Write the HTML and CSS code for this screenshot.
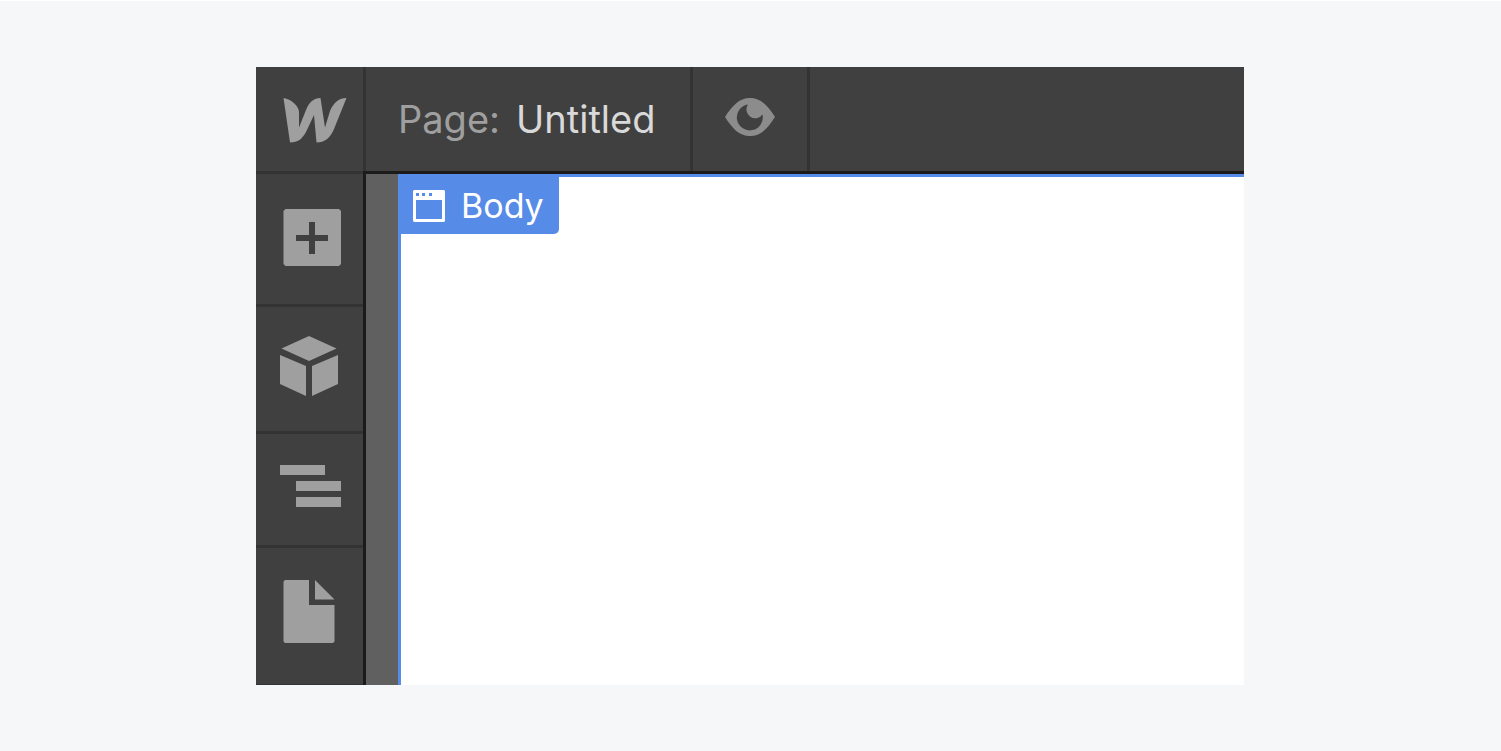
FILE: index.html
```html
<!DOCTYPE html>
<html lang="en">

<head>
    <meta charset="UTF-8">
    <meta name="viewport" content="width=device-width, initial-scale=1.0">
    <title>Designer</title>
    <link rel="stylesheet" href="styles.css">
</head>

<body>

    <div class="designer">
        <header class="topbar">
            <a href="#" class="logo" aria-label="Dashboard">
                <svg width="64" height="46" viewBox="0 0 64 46">
                    <path d="M0.500 0C8 1 16 8 16 14V29.500L23 12C26 4 31 0 37.500 0L42 29.500L47 13C51 4 56 0 63.500 0L51 31C47 40 42 44.500 33.500 44.500L31 17L23 34C19 41 15 44.500 7 44.500Z"/>
                </svg>
            </a>
            <button class="page-name"><span>Page:</span> <strong>Untitled</strong></button>
            <button class="preview" aria-label="Preview">
                <svg width="52" height="40" viewBox="0 0 52 40">
                    <path fill-rule="evenodd" d="M1 20C8 9 15 1 26 1S44 9 51 20C44 31 37 39 26 39S8 31 1 20ZM24 7.500A13 13 0 1 0 38.500 17.500A7.800 7.800 0 1 1 24 7.500Z"/>
                </svg>
            </button>
        </header>

        <div class="workspace">
            <nav class="sidebar">
                <button class="tool tool-add" aria-label="Add element">
                    <svg width="58" height="57" viewBox="0 0 58 57">
                        <path fill-rule="evenodd" d="M2.500 0H56L58 2V55L56 57H2.500L0.500 55V2ZM26 13V26H13V32H26V45H32V32H45V26H32V13Z"/>
                    </svg>
                </button>
                <button class="tool tool-symbols" aria-label="Symbols">
                    <svg width="58" height="60" viewBox="0 0 58 60">
                        <path d="M29 0L56.500 12.500L29 25L1.500 12.500ZM0 19L26 30V60L0 48ZM58 19V48L32 60V30Z"/>
                    </svg>
                </button>
                <button class="tool tool-navigator" aria-label="Navigator">
                    <svg width="61" height="42" viewBox="0 0 61 42">
                        <path d="M0 0H45V10H0ZM16 16H61V26H16ZM16 32H61V42H16Z"/>
                    </svg>
                </button>
                <button class="tool tool-pages" aria-label="Pages">
                    <svg width="52" height="64" viewBox="0 0 52 64">
                        <path d="M2 0H26V25H51.500V61.500L50 63H2L0.500 61.500V1.500ZM32 0L51.500 19.500H32Z"/>
                    </svg>
                </button>
            </nav>

            <main class="stage">
                <div class="canvas">
                    <button class="element-tag">
                        <svg width="32" height="32" viewBox="0 0 32 32">
                            <path fill-rule="evenodd" d="M1 0H31L32 1V31L31 32H1L0 31V1ZM3 10V29H29V10ZM3 3V6H6V3ZM9 3V6H12V3ZM16 3V6H19V3Z"/>
                        </svg>
                        Body
                    </button>
                </div>
            </main>
        </div>
    </div>

</body>

</html>
```

FILE: styles.css
```css
*{
    box-sizing: border-box;
}

body{
    display: flex;
    min-height: 100vh;
    margin: 0;
    padding: 66px 257px 66px 256px;
    border-top: 1px solid #fff;
    background-color: #f5f7f9;
    font-family: Inter, "Liberation Sans", sans-serif;
}

button{
    margin: 0;
    padding: 0;
    border: none;
    background: none;
    color: inherit;
    font: inherit;
    cursor: pointer;
}

svg{
    display: block;
    flex-shrink: 0;
    fill: currentColor;
}

.designer{
    flex: 1;
    display: flex;
    flex-direction: column;
    min-width: 0;
    background-color: #404040;
    color: #9f9f9f;
}

.topbar{
    display: flex;
    height: 104px;
}

.logo{
    display: flex;
    width: 110px;
    padding: 31px 0 0 27px;
    border-right: 3px solid #333;
    color: #9f9f9f;
}

.page-name{
    display: flex;
    align-items: center;
    gap: 16px;
    padding: 0 35px 0 32px;
    border-right: 3px solid #333;
    font-size: 38px;
    font-weight: 400;
}

.page-name strong{
    color: #d9d9d9;
    font-weight: 400;
}

.preview{
    display: flex;
    padding: 30px 31px 0;
    border-right: 3px solid #333;
    color: #8c8c8c;
}

.workspace{
    flex: 1;
    display: flex;
}

.sidebar{
    display: flex;
    flex-direction: column;
    width: 107px;
    border-bottom: 1px solid #333;
}

.tool{
    display: flex;
    border-top: 3px solid #333;
}

.tool-add{
    padding: 35px 0 38px 27px;
}

.tool-symbols{
    padding: 29px 0 35px 24px;
}

.tool-navigator{
    padding: 31px 0 38px 24px;
}

.tool-pages{
    padding: 32px 0 0 27px;
}

.stage{
    flex: 1;
    display: flex;
    padding-left: 32px;
    border-top: 3px solid #1b1b1b;
    border-left: 3px solid #1b1b1b;
    background-color: #606060;
}

.canvas{
    flex: 1;
    border-top: 3px solid #568ce8;
    border-left: 3px solid #568ce8;
    background-color: #fff;
}

.element-tag{
    display: flex;
    align-items: center;
    gap: 16px;
    height: 57px;
    padding: 0 15px 0 12px;
    border-radius: 0 0 5px 0;
    background-color: #568ce8;
    color: #fff;
    font-size: 34px;
    font-weight: 400;
}
```
